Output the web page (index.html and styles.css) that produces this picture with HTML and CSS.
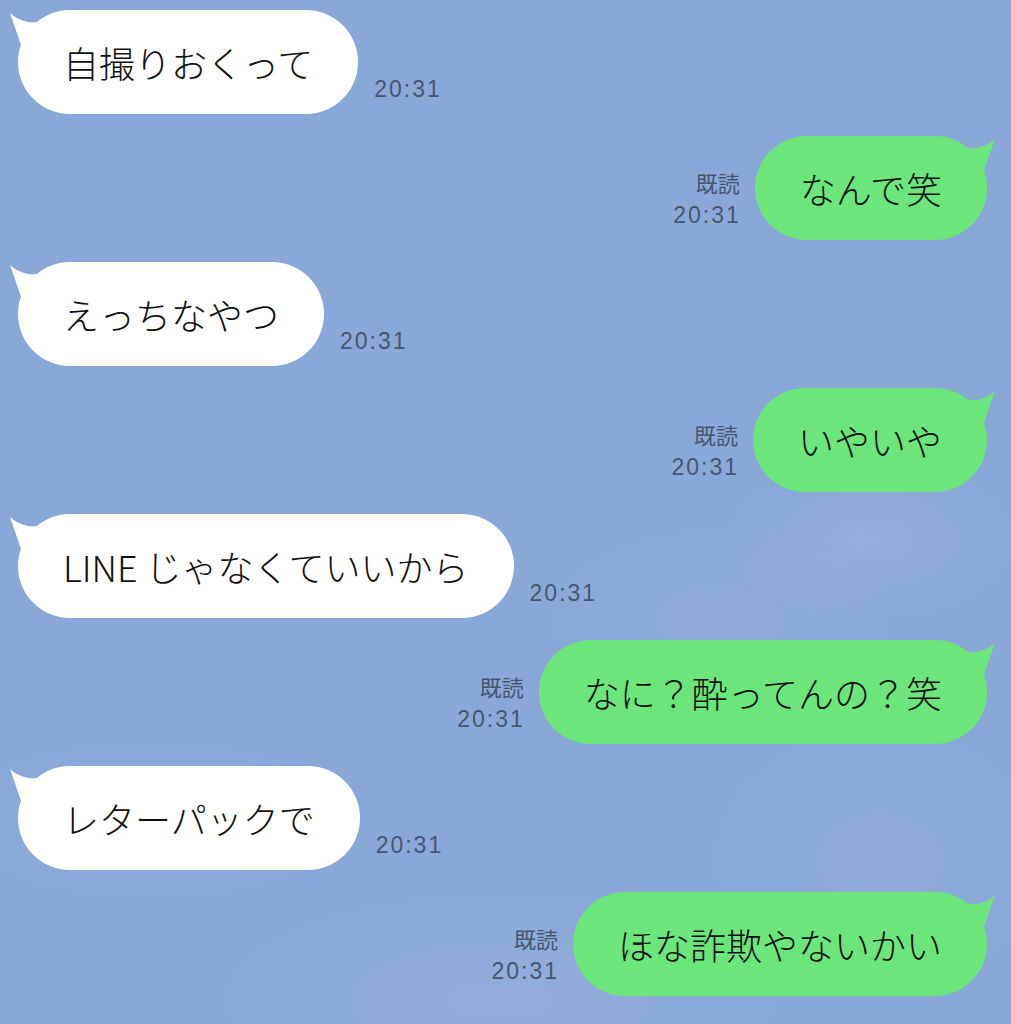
FILE: index.html
```html
<!DOCTYPE html>
<html lang="ja">
<head>
    <meta charset="UTF-8">
    <meta name="viewport" content="width=device-width, initial-scale=1.0">
    <title>トーク</title>
    <link rel="stylesheet" href="styles.css">
</head>
<body>
    <div class="chat">
        <div class="row in">
            <div class="bubble">自撮りおくって<svg class="tail" viewBox="0 0 44 44"><path d="M2,3 C12,12 24,14 34,11 L34,44 L16,44 C10,26 6,14 2,3 Z"/></svg></div>
            <div class="meta"><span>20:31</span></div>
        </div>
        <div class="row out">
            <div class="meta"><span>既読</span><span>20:31</span></div>
            <div class="bubble">なんで笑<svg class="tail" viewBox="0 0 44 44"><path d="M2,3 C12,12 24,14 34,11 L34,44 L16,44 C10,26 6,14 2,3 Z"/></svg></div>
        </div>
        <div class="row in">
            <div class="bubble">えっちなやつ<svg class="tail" viewBox="0 0 44 44"><path d="M2,3 C12,12 24,14 34,11 L34,44 L16,44 C10,26 6,14 2,3 Z"/></svg></div>
            <div class="meta"><span>20:31</span></div>
        </div>
        <div class="row out">
            <div class="meta"><span>既読</span><span>20:31</span></div>
            <div class="bubble">いやいや<svg class="tail" viewBox="0 0 44 44"><path d="M2,3 C12,12 24,14 34,11 L34,44 L16,44 C10,26 6,14 2,3 Z"/></svg></div>
        </div>
        <div class="row in">
            <div class="bubble">LINE じゃなくていいから<svg class="tail" viewBox="0 0 44 44"><path d="M2,3 C12,12 24,14 34,11 L34,44 L16,44 C10,26 6,14 2,3 Z"/></svg></div>
            <div class="meta"><span>20:31</span></div>
        </div>
        <div class="row out">
            <div class="meta"><span>既読</span><span>20:31</span></div>
            <div class="bubble">なに？酔ってんの？笑<svg class="tail" viewBox="0 0 44 44"><path d="M2,3 C12,12 24,14 34,11 L34,44 L16,44 C10,26 6,14 2,3 Z"/></svg></div>
        </div>
        <div class="row in">
            <div class="bubble">レターパックで<svg class="tail" viewBox="0 0 44 44"><path d="M2,3 C12,12 24,14 34,11 L34,44 L16,44 C10,26 6,14 2,3 Z"/></svg></div>
            <div class="meta"><span>20:31</span></div>
        </div>
        <div class="row out">
            <div class="meta"><span>既読</span><span>20:31</span></div>
            <div class="bubble">ほな詐欺やないかい<svg class="tail" viewBox="0 0 44 44"><path d="M2,3 C12,12 24,14 34,11 L34,44 L16,44 C10,26 6,14 2,3 Z"/></svg></div>
        </div>
    </div>
</body>
</html>
```

FILE: styles.css
```css
html, body {
    height: 100%;
}
body {
    margin: 0;
    font-family: "Noto Sans CJK JP", "Noto Sans", sans-serif;
    background-color: #89a8d8;
    background-image:
        radial-gradient(ellipse 220px 120px at 870px 540px, rgba(255,255,255,0.09), rgba(255,255,255,0) 70%),
        radial-gradient(ellipse 260px 140px at 720px 620px, rgba(255,255,255,0.06), rgba(255,255,255,0) 70%),
        radial-gradient(ellipse 300px 120px at 150px 820px, rgba(255,255,255,0.07), rgba(255,255,255,0) 70%),
        radial-gradient(ellipse 420px 160px at 500px 1000px, rgba(255,255,255,0.08), rgba(255,255,255,0) 70%),
        radial-gradient(ellipse 260px 200px at 880px 860px, rgba(255,255,255,0.06), rgba(255,255,255,0) 70%);
    overflow: hidden;
}
.chat {
    display: flex;
    flex-direction: column;
    gap: 22px;
    padding: 10px 24px 0 18px;
}
.row {
    display: flex;
    align-items: flex-end;
}
.row.in {
    justify-content: flex-start;
    gap: 16px;
}
.row.out {
    justify-content: flex-end;
    gap: 14px;
}
.bubble {
    position: relative;
    box-sizing: border-box;
    height: 104px;
    padding: 0 45px;
    display: flex;
    align-items: center;
    border-radius: 52px;
    font-size: 36px;
    font-weight: 300;
    color: #111;
    white-space: nowrap;
}
.in .bubble {
    background: #fff;
}
.out .bubble {
    background: #6ce67b;
}
.tail {
    position: absolute;
    top: 0;
    width: 44px;
    height: 44px;
}
.in .tail {
    left: -10px;
    fill: #fff;
}
.out .tail {
    right: -10px;
    fill: #6ce67b;
    transform: scaleX(-1);
}
.meta {
    display: flex;
    flex-direction: column;
    align-items: flex-end;
    padding-bottom: 10px;
    font-family: "Liberation Sans", "Noto Sans CJK JP", sans-serif;
    font-size: 23px;
    line-height: 30px;
    color: #48566f;
    letter-spacing: 2px;
}
.out .meta span:first-child {
    font-size: 22px;
    letter-spacing: 0;
    margin-right: 1px;
}
```
